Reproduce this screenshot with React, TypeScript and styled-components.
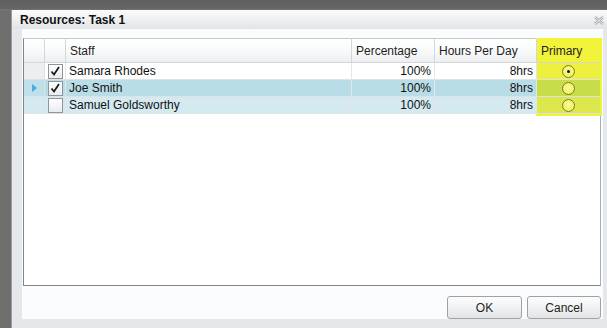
import React from 'react';
import styled, { createGlobalStyle } from 'styled-components';

type RowKind = 'plain' | 'selected' | 'alt';

const staff: { name: string; checked: boolean; primary: boolean; kind: RowKind }[] = [
	{ name: 'Samara Rhodes', checked: true, primary: true, kind: 'plain' },
	{ name: 'Joe Smith', checked: true, primary: false, kind: 'selected' },
	{ name: 'Samuel Goldsworthy', checked: false, primary: false, kind: 'alt' },
];

const rowBg: Record<RowKind, string> = {
	plain: '#ffffff',
	selected: '#b9dde7',
	alt: '#d5eaf0',
};

const indicatorBg: Record<RowKind, string> = {
	plain: '#eceef0',
	selected: '#bfe0ea',
	alt: '#d5eaf0',
};

// highlighted "Primary" column, tinted per row
const primaryBg: Record<RowKind, string> = {
	plain: '#eef03f',
	selected: '#c9dd4a',
	alt: '#dbe74b',
};

export default function App() {
	return (
		<>
			<GlobalStyle />
			<Screen>
				<Dialog>
					<TitleBar>
						<Title>Resources: Task 1</Title>
						<CloseIcon width="10" height="9" viewBox="0 0 10 9">
							<path d="M1 1 L9 8 M9 1 L1 8" stroke="#a9adb1" strokeWidth="2.6" />
							<path d="M1 1 L9 8 M9 1 L1 8" stroke="#f4f5f6" strokeWidth="0.9" />
						</CloseIcon>
					</TitleBar>
					<Body>
						<Grid>
							<Highlight />
							<HeaderRow>
								<HeadCell />
								<HeadCell />
								<HeadCell>Staff</HeadCell>
								<HeadCell>Percentage</HeadCell>
								<HeadCell>Hours Per Day</HeadCell>
								<HeadCell $marked>Primary</HeadCell>
							</HeaderRow>
							{staff.map((s) => (
								<Row key={s.name} $kind={s.kind}>
									<Indicator $kind={s.kind}>
										{s.kind === 'selected' && (
											<svg width="5" height="8" viewBox="0 0 5 8">
												<path d="M0 0 L5 4 L0 8 Z" fill="#4aa9d6" />
											</svg>
										)}
									</Indicator>
									<Cell $center>
										<CheckBox>
											{s.checked && (
												<svg width="12" height="12" viewBox="0 0 12 12">
													<path d="M2.5 6.5 L5 9.5 L10 2" stroke="#1a1a1a" strokeWidth="1.7" fill="none" />
												</svg>
											)}
										</CheckBox>
									</Cell>
									<Cell>{s.name}</Cell>
									<Cell $right>100%</Cell>
									<Cell $right>8hrs</Cell>
									<PrimaryCell $kind={s.kind}>
										<Radio>{s.primary && <Dot />}</Radio>
									</PrimaryCell>
								</Row>
							))}
						</Grid>
						<Footer>
							<Button $w={75}>OK</Button>
							<Button $w={74}>Cancel</Button>
						</Footer>
					</Body>
				</Dialog>
			</Screen>
		</>
	);
}

const GlobalStyle = createGlobalStyle`
	body {
		margin: 0;
		background: #6e6e6e;
		font-family: "Liberation Sans", Arial, sans-serif;
	}
`;

const Screen = styled.div`
	width: 607px;
	height: 328px;
	box-sizing: border-box;
	padding: 10px 0 0 11px;
	overflow: hidden;
	background: linear-gradient(#5f5f5f, #666666 9px, #7a7a7a 10px, #6e6e6e 11px);
`;

const Dialog = styled.div`
	width: 605px;
	height: 318px;
	display: flex;
	flex-direction: column;
	border-left: 1px solid #9a9c9e;
	background: #e5e8eb;
`;

const TitleBar = styled.div`
	height: 19px;
	display: flex;
	align-items: center;
	justify-content: space-between;
	padding: 0 13px 0 8px;
	background: linear-gradient(#fbfbfc, #eef0f2 50%, #e1e4e7);
`;

const Title = styled.span`
	font-size: 12px;
	font-weight: bold;
	color: #111;
`;

const CloseIcon = styled.svg`
	margin-top: 1px;
`;

const Body = styled.div`
	margin-left: 10px;
	width: 581px;
	height: 290px;
	box-sizing: border-box;
	padding: 9px 0 0 1px;
	display: flex;
	flex-direction: column;
	background: #fbfcfd;
`;

const Grid = styled.div`
	position: relative;
	width: 578px;
	height: 248px;
	box-sizing: border-box;
	border: 1px solid #7d868c;
	border-top-color: #c4c9cd;
	border-right-color: #a8aeb3;
	background: #ffffff;
`;

const columns = '21px 21px 286px 83px 102px 63px';

const HeaderRow = styled.div`
	position: relative;
	z-index: 1;
	display: grid;
	grid-template-columns: ${columns};
	height: 23px;
	border-bottom: 1px solid #d3d7da;
`;

const HeadCell = styled.div<{ $marked?: boolean }>`
	display: flex;
	align-items: center;
	padding-left: 4px;
	font-size: 12px;
	color: #1e1e1e;
	border-right: ${(p) => (p.$marked ? 'none' : '1px solid #d3d7da')};
	background: ${(p) => (p.$marked ? 'transparent' : 'linear-gradient(#ffffff, #f7f8f9 60%, #eceef0)')};
`;

const Row = styled.div<{ $kind: RowKind }>`
	position: relative;
	z-index: 1;
	display: grid;
	grid-template-columns: ${columns};
	height: 16px;
	border-bottom: 1px solid #dde2e5;
	background: ${(p) => rowBg[p.$kind]};
`;

const Indicator = styled.div<{ $kind: RowKind }>`
	display: flex;
	align-items: center;
	justify-content: center;
	background: ${(p) => indicatorBg[p.$kind]};
	border-right: 1px solid #dde2e5;
`;

const Cell = styled.div<{ $right?: boolean; $center?: boolean }>`
	display: flex;
	align-items: center;
	justify-content: ${(p) => (p.$right ? 'flex-end' : p.$center ? 'center' : 'flex-start')};
	padding: ${(p) => (p.$right ? '0 3px 0 0' : p.$center ? '0' : '0 0 0 3px')};
	font-size: 12px;
	color: #111;
	white-space: nowrap;
	border-right: 1px solid #e3e7ea;
`;

const PrimaryCell = styled.div<{ $kind: RowKind }>`
	display: flex;
	align-items: center;
	justify-content: center;
	background: ${(p) => primaryBg[p.$kind]};
`;

const CheckBox = styled.div`
	width: 13px;
	height: 13px;
	display: flex;
	align-items: center;
	justify-content: center;
	border: 1px solid #8f969b;
	background: linear-gradient(#ffffff, #e9ecee);
`;

const Radio = styled.div`
	width: 13px;
	height: 13px;
	box-sizing: border-box;
	border-radius: 50%;
	border: 1px solid #7b7b2e;
	display: flex;
	align-items: center;
	justify-content: center;
	background: radial-gradient(circle at 50% 40%, #fafa9a, #eef04a);
`;

const Dot = styled.div`
	width: 3px;
	height: 3px;
	border-radius: 50%;
	background: #111;
`;

const Highlight = styled.div`
	position: absolute;
	z-index: 0;
	left: 512px;
	top: -1px;
	width: 66px;
	height: 78px;
	background: linear-gradient(#f2f43a, #eef23e);
`;

const Footer = styled.div`
	display: flex;
	justify-content: flex-end;
	gap: 5px;
	padding: 10px 2px 0 0;
`;

const Button = styled.button<{ $w: number }>`
	width: ${(p) => p.$w}px;
	height: 23px;
	border: 1px solid #9da2a6;
	border-radius: 3px;
	background: linear-gradient(#fdfdfd, #f1f2f3 50%, #e1e3e5);
	font-family: "Liberation Sans", Arial, sans-serif;
	font-size: 12px;
	color: #1e1e1e;
	padding: 0;
`;
